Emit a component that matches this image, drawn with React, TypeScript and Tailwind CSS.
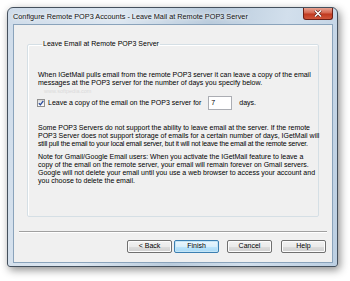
import React from "react";

const font = "font-['Liberation_Sans',Arial,sans-serif]";

const WinButton: React.FC<{ label: string; primary?: boolean; className?: string }> = ({
  label,
  primary,
  className,
}) => (
  <div
    className={`h-[13px] w-[45px] rounded-[2px] border flex items-center justify-center text-[7px] text-black ${
      primary
        ? "border-[#3c7fb1] bg-[linear-gradient(#eaf6fd_0%,#d9f0fc_50%,#bee6fd_51%,#a7d9f5_100%)] shadow-[inset_0_0_0_1px_#c4e5f6]"
        : "border-[#707070] bg-[linear-gradient(#f2f2f2_0%,#ebebeb_50%,#dddddd_51%,#cfcfcf_100%)] shadow-[inset_0_0_0_1px_#fcfcfc]"
    } ${className ?? ""}`}
  >
    {label}
  </div>
);

export default function App() {
  return (
    <div className={`w-[350px] h-[281px] bg-white pt-[7px] pl-[7px] ${font}`}>
      {/* window frame */}
      <div className="w-[331px] h-[260px] flex flex-col rounded-t-[6px] rounded-b-[3px] border border-[#44505d] bg-[linear-gradient(100deg,#cfdcea_0%,#dde7f1_30%,#b9cbdc_55%,#d2dfec_75%,#bccfe2_100%)] shadow-[2px_3px_8px_rgba(0,0,0,0.45)]">
        {/* title bar */}
        <div className="h-[16px] flex items-start justify-between pl-[5px] pr-[4px]">
          <span className="text-[7.3px] leading-[17px] text-[#111] whitespace-nowrap [text-shadow:0_0_6px_#fff,0_0_3px_#fff]">
            Configure Remote POP3 Accounts - Leave Mail at Remote POP3 Server
          </span>
          <div className="w-[30px] h-[12px] rounded-b-[3px] border border-t-0 border-[#6b1f16] bg-[linear-gradient(#e8a493_0%,#d5664f_45%,#c0391f_55%,#d0563b_100%)] flex items-center justify-center">
            <svg width="8" height="7" viewBox="0 0 8 7">
              <path d="M1 0.5 L7 6.5 M7 0.5 L1 6.5" stroke="#5a1a12" strokeWidth="2.6" />
              <path d="M1 0.5 L7 6.5 M7 0.5 L1 6.5" stroke="#fff" strokeWidth="1.5" />
            </svg>
          </div>
        </div>

        {/* client area */}
        <div className="flex-1 ml-[5px] mr-[4px] mb-[3px] border border-[#8aa3bb] bg-[#f0f0f0] flex flex-col text-black">
          <div className="px-[13px] pt-[15px]">
            <fieldset className="min-w-0 h-[177px] border border-[#d5dfe5] rounded-[2px] shadow-[inset_1px_1px_0_#fff] pl-[10px]">
              <legend className="ml-[4px] px-[1px] text-[7px] leading-[8px]">
                Leave Email at Remote POP3 Server
              </legend>
              <div className="text-[7px] leading-[8px] whitespace-nowrap">
                <div className="mt-[23px]">
                  <div>When IGetMail pulls email from the remote POP3 server it can leave a copy of the email</div>
                  <div>messages at the POP3 server for the number of days you specify below.</div>
                </div>
                {/* faint watermark sitting between the lines */}
                <div className="h-[9px] pl-[6px] text-[5.5px] leading-[9px] text-[#dadada]">www.softpedia.com</div>
                <div className="h-[14px] flex items-center">
                  <div className="w-[8px] h-[8px] border border-[#8f8f8f] bg-[linear-gradient(#dcdcdc,#ffffff)] flex items-center justify-center -ml-[1px]">
                    <svg width="6" height="6" viewBox="0 0 6 6">
                      <path d="M0.8 3.2 L2.4 4.8 L5.3 0.8" fill="none" stroke="#2a4b9b" strokeWidth="1.3" />
                    </svg>
                  </div>
                  <span className="ml-[3px]">Leave a copy of the email on the POP3 server for</span>
                  <div className="ml-[7px] w-[24px] h-[14px] border border-[#abadb3] bg-white pl-[2px] leading-[12px]">
                    7
                  </div>
                  <span className="ml-[7px]">days.</span>
                </div>
                <div className="mt-[14px]">
                  <div>Some POP3 Servers do not support the ability to leave email at the server. If the remote</div>
                  <div>POP3 Server does not support storage of emails for a certain number of days, IGetMail will</div>
                  <div className="tracking-[-0.2px]">still pull the email to your local email server, but it will not leave the email at the remote server.</div>
                </div>
                <div className="mt-[5px]">
                  <div>Note for Gmail/Google Email users: When you activate the IGetMail feature to leave a</div>
                  <div>copy of the email on the remote server, your email will remain forever on Gmail servers.</div>
                  <div>Google will not delete your email until you use a web browser to access your account and</div>
                  <div>you choose to delete the email.</div>
                </div>
              </div>
            </fieldset>
          </div>

          <div className="mx-[5px] mt-[14px] border-t border-b border-t-[#a0a0a0] border-b-white" />

          <div className="mt-[7px] mr-[6px] flex justify-end">
            <WinButton label="< Back" />
            <WinButton label="Finish" primary className="ml-[2px] w-[44px]" />
            <WinButton label="Cancel" className="ml-[8px]" />
            <WinButton label="Help" className="ml-[9px]" />
          </div>
        </div>
      </div>
    </div>
  );
}
